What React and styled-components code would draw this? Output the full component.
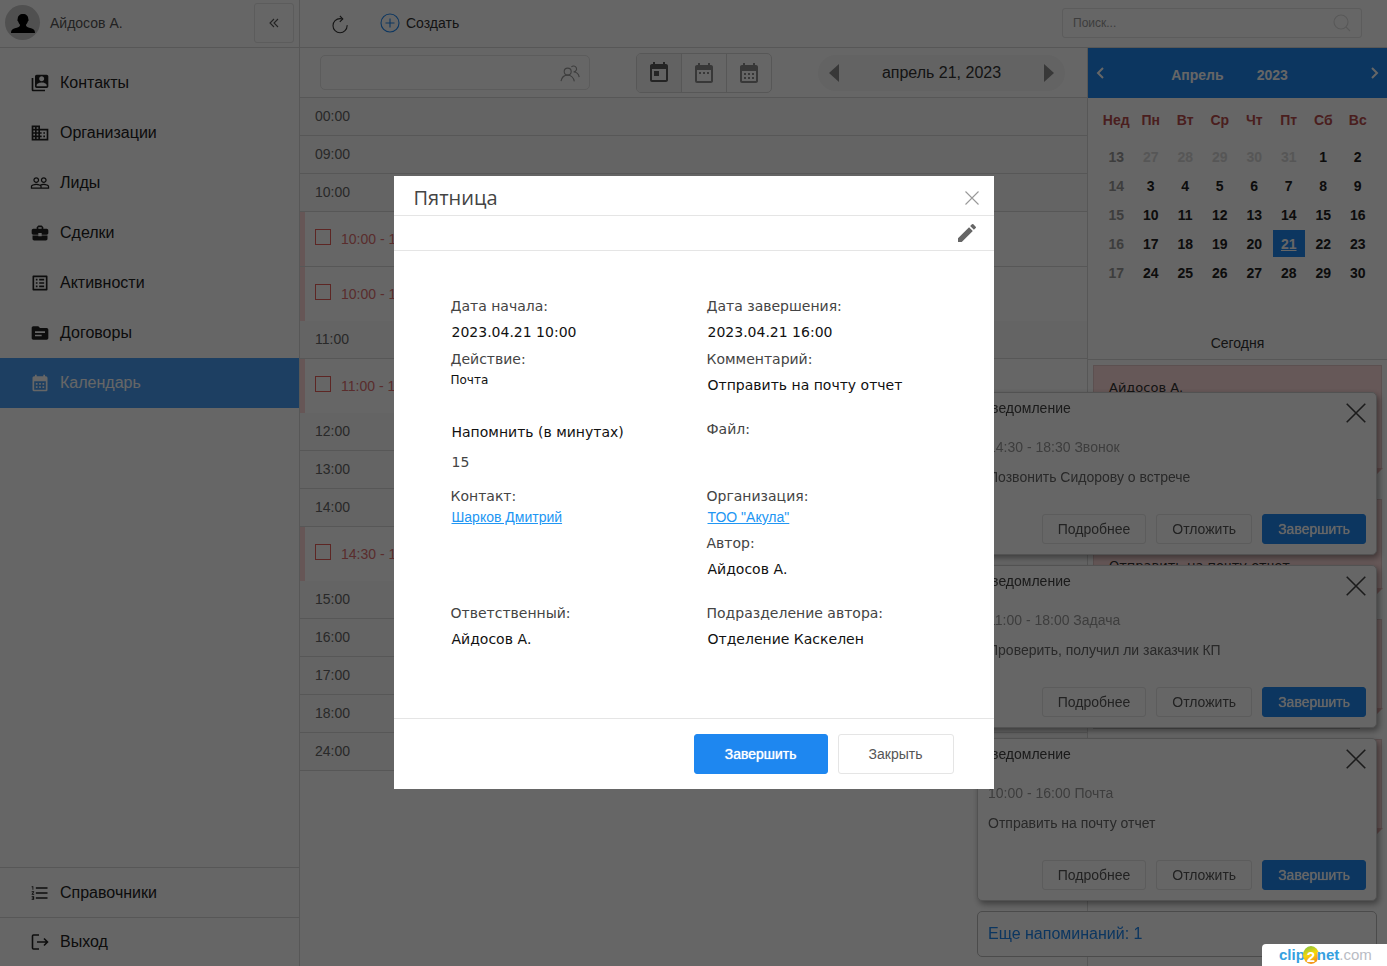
import React from 'react';
import styled, { createGlobalStyle, css } from 'styled-components';
import {
  MdSwitchAccount,
  MdBusiness,
  MdPeopleOutline,
  MdBusinessCenter,
  MdListAlt,
  MdSource,
  MdCalendarMonth,
  MdDateRange,
  MdToday,
  MdFormatListNumbered,
  MdEdit,
} from 'react-icons/md';

const blue = '#1e87f0';
const line = '#dadada';
const sans = '"Liberation Sans", Arial, sans-serif';
const wide = '"DejaVu Sans", Verdana, sans-serif';

const GlobalStyle = createGlobalStyle`
  * { box-sizing: border-box; }
  body { margin: 0; background: #fff; color: #333; font: 14px/20px ${sans}; }
  button, input { font: inherit; color: inherit; margin: 0; }
  button { cursor: pointer; }
  a { color: inherit; }
  svg { display: block; flex: none; }
`;

/* ---------- icons ---------- */

const Stroke = ({ size = 20, width = 1.1, box = 20, children }) => (
  <svg width={size} height={size} viewBox={`0 0 ${box} ${box}`} fill="none" stroke="currentColor" strokeWidth={width} aria-hidden="true">
    {children}
  </svg>
);
const IconRefresh = () => (
  <Stroke>
    <path d="M17.08,11.15 C17.09,11.31 17.1,11.47 17.1,11.64 C17.1,15.53 13.94,18.69 10.05,18.69 C6.16,18.68 3,15.53 3,11.63 C3,7.74 6.16,4.58 10.05,4.58 C10.9,4.58 11.71,4.73 12.46,5" />
    <polyline points="9.9 2 12.79 4.89 9.79 7.9" />
  </Stroke>
);
const IconPlusCircle = () => (
  <Stroke>
    <circle cx="10" cy="10" r="9" />
    <path d="M10 5.5v9M5.5 10h9" />
  </Stroke>
);
const IconSearch = () => (
  <Stroke>
    <circle cx="9" cy="9" r="7" />
    <path d="M14 14l4 4" />
  </Stroke>
);
const IconUsers = () => (
  <Stroke>
    <circle cx="7.7" cy="8.6" r="3.5" />
    <path d="M1,18.1 C1.7,14.6 4.4,12.1 7.6,12.1 C10.9,12.1 13.7,14.8 14.3,18.3" />
    <path d="M11.4,4 C12.8,2.4 15.4,2.8 16.3,4.7 C17.2,6.6 15.7,8.9 13.6,8.9 C16.5,8.9 18.8,11.3 19.2,14.1" />
  </Stroke>
);
const IconCollapse = () => (
  <Stroke size={10} box={10}>
    <path d="M5 1L1 5l4 4M9 1L5 5l4 4" />
  </Stroke>
);
const IconClose = ({ size, width }) => (
  <Stroke size={size} width={width} box={14}>
    <path d="M.5 .5l13 13M13.5 .5l-13 13" />
  </Stroke>
);
const IconChevron = ({ right }) => (
  <svg width="8" height="12" viewBox="0 0 8 12" fill="none" stroke="currentColor" strokeWidth="2" aria-hidden="true">
    <path d={right ? 'M1 1l5 5-5 5' : 'M7 1L2 6l5 5'} />
  </svg>
);
const IconTriangle = ({ right }) => (
  <svg width="10" height="18" viewBox="0 0 10 18" fill="currentColor" aria-hidden="true">
    <path d={right ? 'M0 0l10 9-10 9z' : 'M10 0L0 9l10 9z'} />
  </svg>
);
const IconExit = () => (
  <svg width="20" height="20" viewBox="0 0 20 20" fill="none" stroke="currentColor" strokeWidth="1.6" aria-hidden="true">
    <path d="M9 3H3.500q-1 0-1 1v12q0 1 1 1H9M7 10h10.500M14 6.500L17.500 10 14 13.500" />
  </svg>
);
const IconPerson = () => (
  <svg width="24" height="19" viewBox="0 0 24 19" fill="#000" aria-hidden="true">
    <path d="M12 0c3.300 0 5.300 2 5.300 5 0 .5.4.6.3 1.300-.1.700-.6.9-.8 1.300-.4 1.500-1 2.300-1.700 3v1.500c1 1.600 4.700 1.900 6.900 2.900 1.300.7 2 2 2 4H0c0-2 .7-3.300 2-4 2.200-1 5.900-1.300 6.900-2.900v-1.500c-.7-.7-1.300-1.500-1.700-3-.2-.4-.7-.6-.8-1.300 0-.7.3-.8.3-1.300C6.700 2 8.700 0 12 0z" />
  </svg>
);

/* ---------- page frame ---------- */

const Page = styled.div`
  display: flex;
  min-height: 100vh;
`;
const Sidebar = styled.aside`
  display: flex;
  flex-direction: column;
  width: 300px;
  flex: none;
  border-right: 1px solid ${line};
`;
const Profile = styled.header`
  display: flex;
  align-items: center;
  gap: 10px;
  height: 48px;
  padding: 0 5px 2px;
  border-bottom: 1px solid ${line};
  color: #555;
`;
const ProfileName = styled.span`
  flex: 1;
`;
const Avatar = styled.span`
  display: flex;
  justify-content: center;
  align-items: flex-end;
  width: 35px;
  height: 35px;
  padding-bottom: 7px;
  border-radius: 50%;
  background: #c8c8c8;
`;
const Collapse = styled.button`
  display: grid;
  place-items: center;
  width: 40px;
  height: 40px;
  border: 1px solid #e5e5e5;
  border-radius: 3px;
  background: none;
`;
const Menu = styled.nav`
  flex: 1;
  padding-top: 10px;
`;
const MenuItem = styled.a`
  display: flex;
  align-items: center;
  gap: 10px;
  height: 50px;
  padding: 0 30px;
  font-size: 16px;
  text-decoration: none;
  color: ${(p) => (p.$active ? '#fff' : '#222')};
  background: ${(p) => (p.$active ? '#4a9ff5' : 'none')};
  ${(p) => p.$ruled && css`
    border-top: 1px solid ${line};
    &:last-child { height: 49px; }
  `}
`;
const Content = styled.div`
  display: flex;
  flex-direction: column;
  flex: 1;
  min-width: 0;
`;
const TopBar = styled.header`
  display: flex;
  align-items: center;
  height: 48px;
  padding: 0 25px 0 30px;
  border-bottom: 1px solid ${line};
`;
const PlainButton = styled.button`
  display: flex;
  align-items: center;
  gap: 6px;
  padding: 0;
  border: 0;
  background: none;
  color: ${(p) => p.$color || 'inherit'};
`;
const Create = styled(PlainButton)`
  flex: 1;
  margin-left: 30px;
  padding-bottom: 2px;
  svg { color: ${blue}; }
`;
const SearchBox = styled.label`
  display: flex;
  align-items: center;
  width: 300px;
  height: 30px;
  margin-bottom: 2px;
  padding: 0 9px 0 10px;
  border: 1px solid #e5e5e5;
  border-radius: 3px;
  color: #ddd;
`;
const BareInput = styled.input`
  flex: 1;
  min-width: 0;
  padding: 0;
  border: 0;
  outline: 0;
  background: none;
  font-size: 12px;
  color: #666;
  &::placeholder { color: #999; opacity: 1; }
`;
const Body = styled.div`
  display: flex;
  flex: 1;
`;

/* ---------- day schedule ---------- */

const Schedule = styled.main`
  flex: 1;
  min-width: 0;
`;
const Tools = styled.div`
  display: flex;
  align-items: center;
  gap: 46px;
  height: 50px;
  padding: 0 20px;
  border-bottom: 1px solid ${line};
`;
const PeopleBox = styled(SearchBox)`
  width: 270px;
  height: 35px;
  margin: 0;
  border-radius: 5px;
  color: #999;
`;
const ViewGroup = styled.div`
  display: flex;
  height: 40px;
  border: 1px solid ${line};
  border-radius: 5px;
  overflow: hidden;
`;
const ViewButton = styled.button`
  display: grid;
  place-items: center;
  width: 45px;
  padding: 0;
  border: 0;
  background: ${(p) => (p.$active ? '#f6f6f6' : 'none')};
  color: ${(p) => (p.$active ? '#5a5a5a' : '#8c8c8c')};
  &:first-child { width: 44px; }
  & + & { border-left: 1px solid ${line}; }
`;
const DatePill = styled.div`
  display: flex;
  align-items: center;
  justify-content: space-between;
  width: 247px;
  height: 36px;
  padding: 0 11px;
  border-radius: 18px;
  background: #f7f7f7;
  font-size: 16px;
`;
const Hour = styled.div`
  height: 38px;
  padding: 8px 15px;
  border-bottom: 1px solid ${line};
  background: #fafafa;
  color: #666;
`;
const Event = styled.label`
  display: flex;
  align-items: center;
  gap: 10px;
  height: 54px;
  padding: 0 10px;
  border-left: 5px solid #ffd6d6;
  color: #e07070;
`;
const EventSlot = styled.div`
  & + & { border-top: 1px solid ${line}; }
`;
const Tick = styled.input`
  appearance: none;
  width: 16px;
  height: 16px;
  margin-bottom: 4px;
  border: 1px solid #e8605a;
`;

/* ---------- right panel ---------- */

const Panel = styled.aside`
  width: 300px;
  flex: none;
  border-left: 1px solid ${line};
`;
const MonthBar = styled.div`
  display: flex;
  align-items: center;
  justify-content: space-between;
  height: 50px;
  padding: 0 8px;
  background: ${blue};
  color: #fff;
  font-weight: 700;
`;
const MonthName = styled.div`
  display: flex;
  gap: 33px;
  padding: 4px 16px 0 0;
`;
const MonthTable = styled.table`
  width: 278px;
  margin: 3px 0 0 10px;
  table-layout: fixed;
  border-spacing: 2px;
  text-align: center;
  font-weight: 700;
  th { height: 38px; padding: 0 0 5px; color: #b84d4d; }
`;
const Day = styled.td`
  height: 27px;
  padding: 0;
  color: ${(p) => (p.$tone === 'week' ? '#999' : p.$tone === 'out' ? '#d8d8d8' : p.$tone === 'on' ? '#fff' : '#222')};
  ${(p) => p.$tone === 'on' && css`background: ${blue}; text-decoration: underline;`}
`;
const Today = styled(PlainButton)`
  margin: 45px auto 6px;
`;
const Agenda = styled.div`
  padding: 5px 5px 0;
  border-top: 1px solid ${line};
`;
const AgendaCard = styled.article`
  position: relative;
  min-height: ${(p) => (p.$tall ? 104 : 90)}px;
  padding: 11px 15px;
  border: 1px solid #e6c8c8;
  background: #ffdcdc;
  font: 13px/22px ${wide};
  &::after {
    content: '';
    position: absolute;
    top: 100%;
    right: -2px;
    border-top: 12px solid #e8b4b4;
    border-right: 12px solid transparent;
  }
`;
const AgendaRule = styled.hr`
  margin: 19px 22px 10px 0;
  border: 0;
  border-top: 1px solid #ccc;
`;

/* ---------- notifications ---------- */

const Notices = styled.section`
  position: fixed;
  right: 10px;
  bottom: 9px;
  display: flex;
  flex-direction: column;
  gap: 10px;
  width: 400px;
`;
const Notice = styled.article`
  display: flex;
  flex-direction: column;
  padding: 5px 10px 10px;
  border: 1px solid #ccc;
  border-radius: 5px;
  background: #fff;
  box-shadow: 2px 3px 6px rgba(0, 0, 0, 0.4);
`;
const NoticeHead = styled.header`
  display: flex;
  justify-content: space-between;
  height: 39px;
  margin-left: -5px;
  color: #444;
`;
const NoticeTime = styled.div`
  color: #999;
`;
const NoticeText = styled.p`
  margin: 10px 0 27px;
  color: #666;
`;
const NoticeClose = styled(PlainButton)`
  align-self: flex-start;
  margin-top: 5px;
`;
const ButtonRow = styled.div`
  display: flex;
  justify-content: flex-end;
  gap: 10px;
`;
const Button = styled.button`
  height: ${(p) => (p.$large ? 40 : 30)}px;
  padding: 0 ${(p) => (p.$large ? 30 : 15)}px;
  border: 1px solid ${(p) => (p.$primary ? blue : '#e5e5e5')};
  border-radius: 3px;
  background: ${(p) => (p.$primary ? blue : '#fff')};
  color: ${(p) => (p.$primary ? '#fff' : '#555')};
  text-shadow: ${(p) => (p.$primary ? '0 0 1px #fff' : 'none')};
`;
const More = styled.a`
  height: 46px;
  padding: 12px 10px;
  border: 1px solid #bbb;
  border-radius: 5px;
  background: #fff;
  font-size: 16px;
  text-decoration: none;
  color: ${blue};
`;

/* ---------- dialog ---------- */

const Overlay = styled.div`
  position: fixed;
  inset: 0;
  display: flex;
  align-items: center;
  justify-content: center;
  padding-bottom: 1px;
  background: rgba(0, 0, 0, 0.6);
`;
const Dialog = styled.div`
  width: 600px;
  background: #fff;
  color: #444;
`;
const DialogHead = styled.header`
  display: flex;
  align-items: center;
  justify-content: space-between;
  height: 40px;
  padding: 4px 15px 0 20px;
  border-bottom: 1px solid #e5e5e5;
  color: #999;
`;
const DialogTitle = styled.h2`
  margin: 0;
  font: 400 20px/36px "Open Sans", "Noto Sans", sans-serif;
  color: #444;
`;
const DialogTools = styled.div`
  display: flex;
  align-items: center;
  justify-content: flex-end;
  height: 35px;
  padding: 0 15px;
  border-bottom: 1px solid #e5e5e5;
`;
const Fields = styled.dl`
  display: grid;
  grid-template-columns: 256px 1fr;
  grid-template-rows: 53px 70px 67px 47px 70px 46px;
  margin: 0;
  padding: 45px 20px 69px 57px;
  font: 14px/20px ${wide};
`;
const Field = styled.div`
  display: flex;
  flex-direction: column;
  gap: ${(p) => (p.$compact ? 1 : 6)}px;
`;
const ReminderField = styled(Field)`
  gap: 10px;
  padding: 3px 0 0 1px;
  dt { color: #111; }
  dd { padding: 0; color: #444; }
`;
const Label = styled.dt`
  color: #444;
`;
const Value = styled.dd`
  margin: 0;
  padding-left: ${(p) => (p.$small ? 0 : 1)}px;
  color: #111;
  font-size: ${(p) => (p.$small ? 12 : 14)}px;
`;
const Link = styled.a`
  font-family: ${sans};
  font-size: 14px;
  color: #2196f3;
`;
const DialogFoot = styled.footer`
  padding: 15px 40px;
  border-top: 1px solid #e5e5e5;
`;

/* ---------- corner mark ---------- */

const Mark = styled.div`
  position: fixed;
  right: 0;
  bottom: 0;
  display: flex;
  align-items: center;
  width: 125px;
  height: 22px;
  padding-left: 17px;
  border-top-left-radius: 4px;
  background: #fff;
  font: 700 15px/22px ${sans};
  color: #35a0e0;
`;
const MarkBall = styled.span`
  display: grid;
  place-items: center;
  width: 16px;
  height: 18px;
  margin: 0 -2px;
  border-radius: 50%;
  background: linear-gradient(160deg, #8fc43a 10%, #f5d90a 45%, #f28a1c 90%);
  color: #fff;
`;
const MarkTail = styled.span`
  font-weight: 400;
  color: #b9bcc4;
`;

/* ---------- data ---------- */

const menu = [
  ['Контакты', MdSwitchAccount],
  ['Организации', MdBusiness],
  ['Лиды', MdPeopleOutline],
  ['Сделки', MdBusinessCenter],
  ['Активности', MdListAlt],
  ['Договоры', MdSource],
  ['Календарь', MdCalendarMonth],
];
const hours = [
  ['00:00'], ['09:00'],
  ['10:00', '10:00 - 16:00 Почта', '10:00 - 12:00 Встреча'],
  ['11:00', '11:00 - 18:00 Задача'],
  ['12:00'], ['13:00'],
  ['14:00', '14:30 - 18:30 Звонок'],
  ['15:00'], ['16:00'], ['17:00'], ['18:00'], ['24:00'],
];
const weekdays = ['Нед', 'Пн', 'Вт', 'Ср', 'Чт', 'Пт', 'Сб', 'Вс'];
const weeks = [
  [13, 27, 28, 29, 30, 31, 1, 2],
  [14, 3, 4, 5, 6, 7, 8, 9],
  [15, 10, 11, 12, 13, 14, 15, 16],
  [16, 17, 18, 19, 20, 21, 22, 23],
  [17, 24, 25, 26, 27, 28, 29, 30],
];
const agenda = [
  ['Айдосов А.'],
  ['', '', 'Отправить на почту отчет'],
  [],
  [],
];
const notices = [
  ['14:30 - 18:30 Звонок', 'Позвонить Сидорову о встрече'],
  ['11:00 - 18:00 Задача', 'Проверить, получил ли заказчик КП'],
  ['10:00 - 16:00 Почта', 'Отправить на почту отчет'],
];

const toneOf = (row, col, day) => {
  if (col === 0) return 'week';
  if (row === 0 && day > 20) return 'out';
  return day === 21 ? 'on' : 'day';
};

const AgendaLine = styled.div`
  min-height: 22px;
`;

export default function App() {
  return (
    <>
      <GlobalStyle />
      <Page>
        <Sidebar>
          <Profile>
            <Avatar><IconPerson /></Avatar>
            <ProfileName>Айдосов А.</ProfileName>
            <Collapse aria-label="Свернуть"><IconCollapse /></Collapse>
          </Profile>
          <Menu>
            {menu.map(([name, Icon]) => (
              <MenuItem key={name} href="#" $active={name === 'Календарь'}>
                <Icon size={20} />{name}
              </MenuItem>
            ))}
          </Menu>
          <MenuItem href="#" $ruled><MdFormatListNumbered size={20} />Справочники</MenuItem>
          <MenuItem href="#" $ruled><IconExit />Выход</MenuItem>
        </Sidebar>
        <Content>
          <TopBar>
            <PlainButton aria-label="Обновить"><IconRefresh /></PlainButton>
            <Create><IconPlusCircle />Создать</Create>
            <SearchBox>
              <BareInput placeholder="Поиск..." aria-label="Поиск" />
              <IconSearch />
            </SearchBox>
          </TopBar>
          <Body>
            <Schedule>
              <Tools>
                <PeopleBox>
                  <BareInput aria-label="Сотрудник" />
                  <IconUsers />
                </PeopleBox>
                <ViewGroup>
                  <ViewButton $active aria-label="День"><MdToday size={24} /></ViewButton>
                  <ViewButton aria-label="Неделя"><MdDateRange size={24} /></ViewButton>
                  <ViewButton aria-label="Месяц"><MdCalendarMonth size={24} /></ViewButton>
                </ViewGroup>
                <DatePill>
                  <PlainButton $color="#8c8c8c" aria-label="Предыдущий день"><IconTriangle /></PlainButton>
                  апрель 21, 2023
                  <PlainButton $color="#8c8c8c" aria-label="Следующий день"><IconTriangle right /></PlainButton>
                </DatePill>
              </Tools>
              {hours.map(([hour, ...events]) => (
                <section key={hour}>
                  <Hour>{hour}</Hour>
                  {events.map((text) => (
                    <EventSlot key={text}>
                      <Event><Tick type="checkbox" />{text}</Event>
                    </EventSlot>
                  ))}
                </section>
              ))}
            </Schedule>
            <Panel>
              <MonthBar>
                <PlainButton aria-label="Предыдущий месяц"><IconChevron /></PlainButton>
                <MonthName><span>Апрель</span><span>2023</span></MonthName>
                <PlainButton aria-label="Следующий месяц"><IconChevron right /></PlainButton>
              </MonthBar>
              <MonthTable>
                <thead>
                  <tr>{weekdays.map((d) => <th key={d}>{d}</th>)}</tr>
                </thead>
                <tbody>
                  {weeks.map((week, r) => (
                    <tr key={week[0]}>
                      {week.map((d, c) => <Day key={c} $tone={toneOf(r, c, d)}>{d}</Day>)}
                    </tr>
                  ))}
                </tbody>
              </MonthTable>
              <Today>Сегодня</Today>
              <Agenda>
                {agenda.map((lines, i) => (
                  <React.Fragment key={i}>
                    <AgendaCard $tall={i === 0}>
                      {lines.map((text, n) => <AgendaLine key={n}>{text}</AgendaLine>)}
                    </AgendaCard>
                    <AgendaRule />
                  </React.Fragment>
                ))}
              </Agenda>
            </Panel>
          </Body>
        </Content>
      </Page>

      <Notices>
        {notices.map(([time, text]) => (
          <Notice key={time}>
            <NoticeHead>
              Уведомление
              <NoticeClose aria-label="Закрыть уведомление"><IconClose size={20} width={1.1} /></NoticeClose>
            </NoticeHead>
            <NoticeTime>{time}</NoticeTime>
            <NoticeText>{text}</NoticeText>
            <ButtonRow>
              <Button>Подробнее</Button>
              <Button>Отложить</Button>
              <Button $primary>Завершить</Button>
            </ButtonRow>
          </Notice>
        ))}
        <More href="#">Еще напоминаний: 1</More>
      </Notices>

      <Overlay>
        <Dialog role="dialog" aria-modal="true" aria-labelledby="dialog-title">
          <DialogHead>
            <DialogTitle id="dialog-title">Пятница</DialogTitle>
            <PlainButton aria-label="Закрыть окно"><IconClose size={14} width={1.1} /></PlainButton>
          </DialogHead>
          <DialogTools>
            <PlainButton $color="#666" aria-label="Редактировать"><MdEdit size={24} /></PlainButton>
          </DialogTools>
          <Fields>
            <Field><Label>Дата начала:</Label><Value>2023.04.21 10:00</Value></Field>
            <Field><Label>Дата завершения:</Label><Value>2023.04.21 16:00</Value></Field>
            <Field $compact><Label>Действие:</Label><Value $small>Почта</Value></Field>
            <Field><Label>Комментарий:</Label><Value>Отправить на почту отчет</Value></Field>
            <ReminderField><Label>Напомнить (в минутах)</Label><Value>15</Value></ReminderField>
            <Field><Label>Файл:</Label></Field>
            <Field $compact><Label>Контакт:</Label><Value><Link href="#">Шарков Дмитрий</Link></Value></Field>
            <Field $compact><Label>Организация:</Label><Value><Link href="#">ТОО "Акула"</Link></Value></Field>
            <span />
            <Field><Label>Автор:</Label><Value>Айдосов А.</Value></Field>
            <Field><Label>Ответственный:</Label><Value>Айдосов А.</Value></Field>
            <Field><Label>Подразделение автора:</Label><Value>Отделение Каскелен</Value></Field>
          </Fields>
          <DialogFoot>
            <ButtonRow>
              <Button $primary $large>Завершить</Button>
              <Button $large>Закрыть</Button>
            </ButtonRow>
          </DialogFoot>
        </Dialog>
      </Overlay>

      <Mark>clip<MarkBall>2</MarkBall>net<MarkTail>.com</MarkTail></Mark>
    </>
  );
}
